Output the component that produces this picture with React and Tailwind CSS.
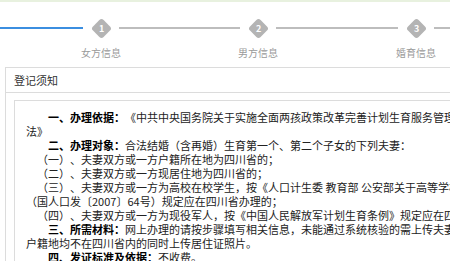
import React from "react";

function Step({ n, label }) {
  return (
    <div className="w-[36px] flex flex-col items-center shrink-0">
      <div className="w-[22px] h-[22px] flex items-center justify-center">
        <div className="w-[15px] h-[15px] rotate-45 rounded-[3px] bg-[#b4b4b4] flex items-center justify-center">
          <span className="-rotate-45 text-white text-[9px] font-bold leading-none">{n}</span>
        </div>
      </div>
      <div className="mt-[7px] whitespace-nowrap text-[10px] leading-[14px] text-[#9a9a9a]">{label}</div>
    </div>
  );
}

function Line({ indent, children }) {
  return (
    <div className={`whitespace-nowrap ${indent}`}>{children}</div>
  );
}

export default function App() {
  return (
    <div
      className="w-[450px] h-[261px] overflow-hidden bg-white text-[#333] [text-spacing-trim:space-all] [font-feature-settings:'fwid'_0]"
      style={{ fontFamily: '"Noto Sans CJK SC", "Noto Sans", sans-serif' }}
    >
      <div className="h-[2px] bg-[#e8f1df]" />
      <div className="flex items-start pt-[15px]">
        <div className="w-[83px] h-[2px] mt-[10px] bg-[#3b8ee0] shrink-0" />
        <Step n="1" label="女方信息" />
        <div className="w-[121px] h-[2px] mt-[10px] bg-[#bdbdbd] shrink-0" />
        <Step n="2" label="男方信息" />
        <div className="w-[122px] h-[2px] mt-[10px] bg-[#bdbdbd] shrink-0" />
        <Step n="3" label="婚育信息" />
        <div className="flex-1 h-[2px] mt-[10px] bg-[#bdbdbd]" />
      </div>
      <div className="ml-[5px] mt-[7px] w-[700px] border-l border-t border-[#dcdcdc]">
        <div className="h-[25px] px-[8px] flex items-center border-b border-[#dcdcdc] text-[11px] text-[#333]">
          登记须知
        </div>
        <div className="pt-[7px] pl-[8px]">
          <div className="border-l border-t border-[#dcdcdc] pl-[11px] pt-[9px] text-[11px] leading-[14px] text-[#222]">
            <Line indent="pl-[22px]">
              <b className="text-black">一、办理依据：</b>《中共中央国务院关于实施全面两孩政策改革完善计划生育服务管理机制的决定》和《四川省计划生育服务证办
            </Line>
            <Line indent="">法》</Line>
            <Line indent="pl-[22px]">
              <b className="text-black">二、办理对象：</b>合法结婚（含再婚）生育第一个、第二个子女的下列夫妻：
            </Line>
            <Line indent="pl-[11px]">（一）、夫妻双方或一方户籍所在地为四川省的；</Line>
            <Line indent="pl-[11px]">（二）、夫妻双方或一方现居住地为四川省的；</Line>
            <Line indent="pl-[11px]">（三）、夫妻双方或一方为高校在校学生，按《人口计生委 教育部 公安部关于高等学校在校学生计划生育服务管理的通知》</Line>
            <Line indent="">（国人口发〔2007〕64号）规定应在四川省办理的；</Line>
            <Line indent="pl-[11px]">（四）、夫妻双方或一方为现役军人，按《中国人民解放军计划生育条例》规定应在四川省办理的。</Line>
            <Line indent="pl-[22px]">
              <b className="text-black">三、所需材料：</b>网上办理的请按步骤填写相关信息，未能通过系统核验的需上传夫妻双方身份证、结婚证照片；夫妻双方
            </Line>
            <Line indent="">户籍地均不在四川省内的同时上传居住证照片。</Line>
            <Line indent="pl-[22px]">
              <b className="text-black">四、发证标准及依据：</b>不收费。
            </Line>
          </div>
        </div>
      </div>
    </div>
  );
}
